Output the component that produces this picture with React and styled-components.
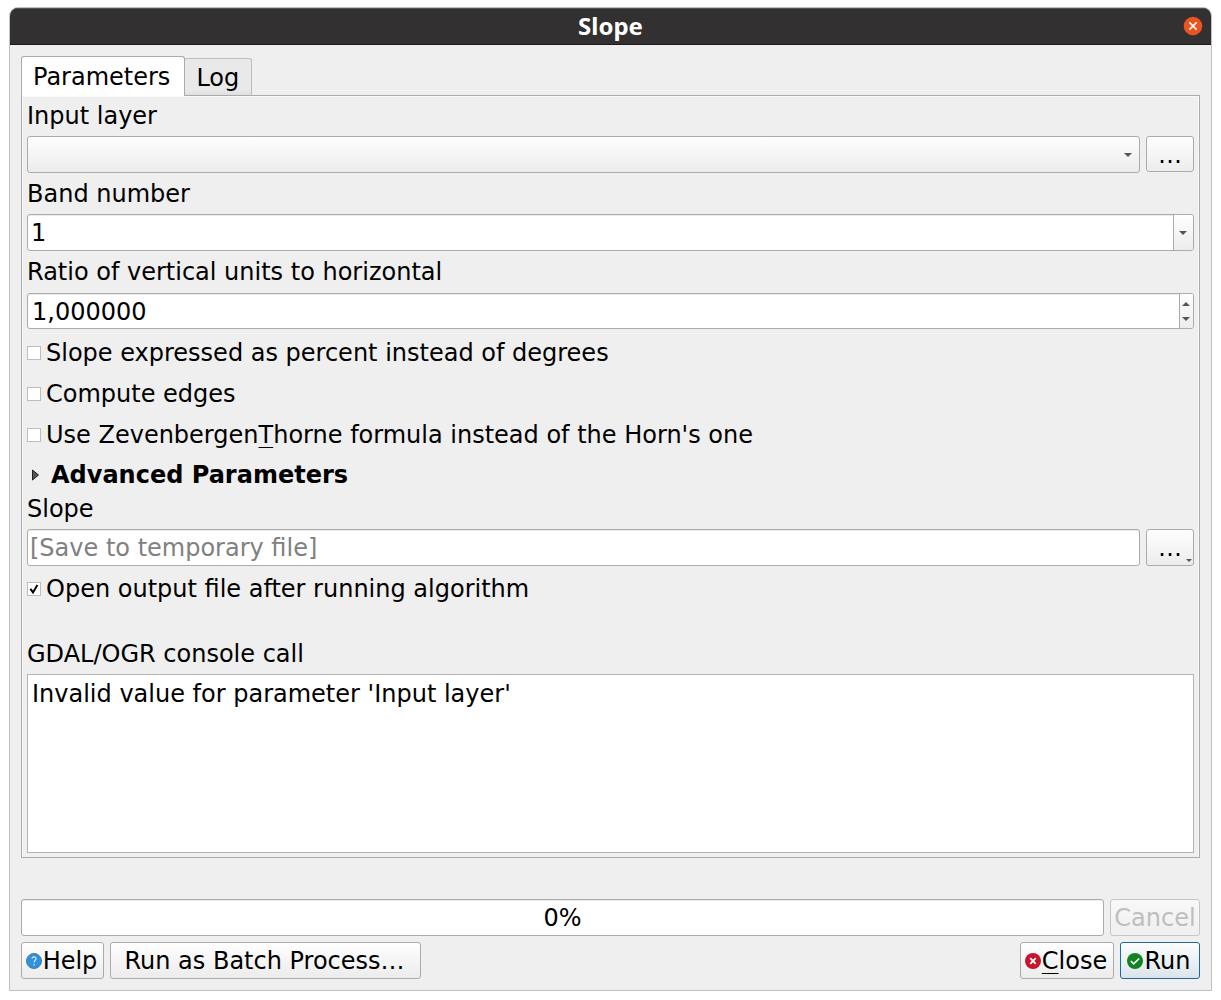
import React, { useState } from "react";
import styled, { createGlobalStyle, css } from "styled-components";

const GlobalStyle = createGlobalStyle`
  * { box-sizing: border-box; }
  body {
    margin: 0;
    background: #fff;
    color: #000;
    font: 24px/28px "DejaVu Sans", sans-serif;
  }
  button, input, select, textarea {
    margin: 0;
    font: inherit;
    color: inherit;
  }
`;

const raised = css`
  border: 1px solid #ababab;
  border-radius: 3px;
  background: linear-gradient(#fefefe, #ececec);
`;

const sunken = css`
  border: 1px solid #ababab;
  border-radius: 3px;
  background: #fff;
  box-shadow: inset 0 1px #ececec;
`;

const Window = styled.main`
  margin: 7px 9px 9px;
  border: 1px solid #c0c0c0;
  border-radius: 9px 9px 0 0;
  background: #efefef;
  overflow: hidden;
`;

const TitleBar = styled.header`
  display: grid;
  grid-template-columns: 1fr auto 1fr;
  align-items: center;
  height: 37px;
  padding: 0 8px 2px;
  background: #333031;
  border-top: 1px solid #555253;
  border-bottom: 1px solid #1d1c1c;
  color: #fff;
`;

const Title = styled.h1`
  grid-column: 2;
  margin: 0;
  font: bold 24px/33px "Noto Sans", sans-serif;
`;

const WindowClose = styled.button`
  justify-self: end;
  display: flex;
  padding: 0;
  border: 0;
  background: none;
`;

const Body = styled.form`
  display: flex;
  flex-direction: column;
  padding: 11px;
`;

const TabList = styled.div`
  display: flex;
  align-items: flex-end;
  height: 39px;
`;

const Tab = styled.button`
  height: ${(p) => (p.$active ? 40 : 38)}px;
  margin-bottom: -1px;
  margin-left: ${(p) => (p.$active ? 0 : -1)}px;
  padding: ${(p) => (p.$active ? "0 14px 0 11px" : "2px 12px 0 11px")};
  border: 1px solid ${(p) => (p.$active ? "#ababab" : "#bdbdbd")};
  border-bottom: ${(p) => (p.$active ? "0" : "1px solid #ababab")};
  border-radius: 3px 3px 0 0;
  background: ${(p) => (p.$active ? "#fff" : "linear-gradient(#e9e9e9 85%, #dfdfdf)")};
  z-index: ${(p) => (p.$active ? 1 : 0)};
`;

const Panel = styled.section`
  display: flex;
  flex-direction: column;
  gap: 6px;
  padding: 5px 5px 4px;
  border: 1px solid #ababab;
  box-shadow: inset 1px 1px #f9f9f9, inset -1px 0 #f9f9f9;
`;

const Label = styled.label`
  height: 29px;
  line-height: 30px;
`;

const Row = styled.div`
  display: flex;
  gap: 6px;
`;

const ComboFrame = styled.div`
  display: grid;
  grid-template-columns: 1fr 20px;
  flex: 1;
  min-height: 37px;
  ${(p) => (p.$editable ? sunken : raised)}
  overflow: hidden;
`;

const ComboSelect = styled.select`
  grid-area: 1 / 1 / 2 / 3;
  width: 100%;
  padding: 0 24px 0 3px;
  appearance: none;
  border: 0;
  background: none;
`;

const ComboArrow = styled.span`
  grid-area: 1 / 2;
  display: flex;
  align-items: center;
  justify-content: center;
  padding-right: 2px;
  pointer-events: none;
  ${(p) =>
    p.$boxed &&
    css`
      border-left: 1px solid #ababab;
      background: linear-gradient(#fefefe, #ececec);
    `}
`;

const SpinFrame = styled.div`
  display: flex;
  height: 36px;
  margin-top: 1px;
  ${sunken}
  overflow: hidden;
`;

const SpinInput = styled.input`
  flex: 1;
  min-width: 0;
  padding: 2px 4px 0;
  border: 0;
  background: none;
`;

const SpinButtons = styled.div`
  display: grid;
  grid-template-rows: 1fr 1fr;
  width: 14px;
  border-left: 1px solid #ababab;
  background: linear-gradient(#fefefe, #ececec);
`;

const SpinButton = styled.button`
  display: flex;
  align-items: center;
  justify-content: center;
  padding: ${(p) => (p.$lower ? "0 2px 2px 0" : "3px 2px 0 0")};
  border: 0;
  background: none;
`;

const CheckRow = styled.label`
  display: flex;
  align-items: center;
  gap: 5px;
  height: ${(p) => (p.$compact ? 33 : 35)}px;
  line-height: 30px;
`;

const CheckBox = styled.input`
  appearance: none;
  width: 14px;
  height: 14px;
  border: 1px solid #bdbdbd;
  background: #fff;
  grid-area: 1 / 1;
`;

const CheckFrame = styled.span`
  display: grid;
  place-items: center;
  svg {
    grid-area: 1 / 1;
    pointer-events: none;
  }
`;

const CheckText = styled.span`
  padding-top: 1px;
`;

const Mnemonic = styled.span`
  text-decoration: underline;
  text-decoration-thickness: 1px;
  text-underline-offset: 4px;
  text-decoration-skip-ink: none;
`;

const GroupToggle = styled.button`
  display: flex;
  align-items: center;
  gap: 12px;
  height: 30px;
  padding: 4px 5px 0;
  border: 0;
  background: none;
  line-height: 26px;
  font-weight: bold;
`;

const FileInput = styled.input`
  flex: 1;
  min-width: 0;
  height: 37px;
  padding: 0 2px;
  ${sunken}
  &::placeholder {
    color: #808080;
    opacity: 1;
  }
`;

const Button = styled.button`
  display: flex;
  align-items: center;
  justify-content: center;
  gap: 1px;
  height: 37px;
  min-width: ${(p) => p.$minWidth || 0}px;
  padding: 0 2px 0 0;
  white-space: nowrap;
  ${raised}
  &:disabled {
    padding: 0;
    color: #bebebe;
    border-color: #c6c6c6;
    background: linear-gradient(#f8f8f8, #efefef);
  }
  ${(p) =>
    p.$primary &&
    css`
      border-color: #20699c;
      background: linear-gradient(#fcfdfe, #dce4ea);
    `}
`;

const BrowseButton = styled(Button)`
  position: relative;
  width: 48px;
  height: ${(p) => (p.$menu ? 37 : 36)}px;
  padding: ${(p) => (p.$menu ? 0 : 2)}px 0 0;
`;

const MenuMark = styled.span`
  position: absolute;
  right: 1px;
  bottom: 3px;
  display: flex;
`;

const Console = styled.textarea`
  display: block;
  width: 100%;
  height: 179px;
  padding: 5px 4px;
  border: 1px solid #b4b4b4;
  background: #fff;
  resize: none;
`;

const ConsoleLabel = styled(Label)`
  margin-top: 28px;
`;

const ProgressRow = styled(Row)`
  margin: 41px 0 6px;
`;

const Progress = styled.div`
  flex: 1;
  height: 37px;
  text-align: center;
  line-height: 36px;
  ${sunken}
`;

const Spacer = styled.div`
  flex: 1;
`;

function Arrow({ up, small }) {
  return (
    <svg width={small ? 6 : 8} height={small ? 3 : 4} viewBox="0 0 8 4" aria-hidden="true">
      <path d={up ? "M0 4L4 0L8 4Z" : "M0 0H8L4 4Z"} fill="#555" />
    </svg>
  );
}

function RoundIcon({ kind }) {
  const fill = { help: "#2f93dc", close: "#c8142f", run: "#118322" }[kind];
  return (
    <svg width="16" height="16" viewBox="0 0 16 16" aria-hidden="true">
      <circle cx="8" cy="8" r={kind === "help" ? 7.5 : 8} fill={fill} stroke={kind === "help" ? "#47769a" : "none"} />
      {kind === "help" && (
        <>
          <path d="M5.9 5.4C6.2 3.4 10 3.4 10 5.7C10 7.4 8 7.5 8 9.6" fill="none" stroke="#d9eefc" strokeWidth="1.2" />
          <circle cx="8" cy="11.8" r=".8" fill="#d9eefc" />
        </>
      )}
      {kind === "close" && <path d="M5.2 5.2L10.8 10.8M10.8 5.2L5.2 10.8" stroke="#fff" strokeWidth="1.8" />}
      {kind === "run" && <path d="M3.8 8L6.7 10.9L12.2 5.5" fill="none" stroke="#fff" strokeWidth="1.6" />}
    </svg>
  );
}

function Check({ children, compact, initial = false }) {
  const [checked, setChecked] = useState(initial);
  return (
    <CheckRow $compact={compact}>
      <CheckFrame>
        <CheckBox type="checkbox" checked={checked} onChange={(e) => setChecked(e.target.checked)} />
        {checked && (
          <svg width="14" height="14" viewBox="0 0 14 14" aria-hidden="true">
            <path d="M3.4 6.8L6 10.4L10.4 3" fill="none" stroke="#000" strokeWidth="2" />
          </svg>
        )}
      </CheckFrame>
      <CheckText>{children}</CheckText>
    </CheckRow>
  );
}

export default function App() {
  return (
    <>
      <GlobalStyle />
      <Window>
        <TitleBar>
          <Title>Slope</Title>
          <WindowClose type="button" aria-label="Close window">
            <svg width="20" height="20" viewBox="0 0 20 20" aria-hidden="true">
              <circle cx="10" cy="10" r="9.3" fill="#e95420" />
              <path d="M6.4 6.4L13.6 13.6M13.6 6.4L6.4 13.6" stroke="#fff" strokeWidth="1.5" />
            </svg>
          </WindowClose>
        </TitleBar>
        <Body onSubmit={(e) => e.preventDefault()}>
          <TabList role="tablist">
            <Tab type="button" role="tab" aria-selected="true" $active>Parameters</Tab>
            <Tab type="button" role="tab" aria-selected="false">Log</Tab>
          </TabList>
          <Panel role="tabpanel">
            <Label htmlFor="layer">Input layer</Label>
            <Row>
              <ComboFrame>
                <ComboSelect id="layer"><option value="" /></ComboSelect>
                <ComboArrow><Arrow /></ComboArrow>
              </ComboFrame>
              <BrowseButton type="button">…</BrowseButton>
            </Row>
            <Label htmlFor="band">Band number</Label>
            <ComboFrame $editable>
              <ComboSelect id="band"><option>1</option></ComboSelect>
              <ComboArrow $boxed><Arrow /></ComboArrow>
            </ComboFrame>
            <Label htmlFor="ratio">Ratio of vertical units to horizontal</Label>
            <SpinFrame>
              <SpinInput id="ratio" type="text" inputMode="decimal" defaultValue="1,000000" />
              <SpinButtons>
                <SpinButton type="button" aria-label="Increase"><Arrow up /></SpinButton>
                <SpinButton type="button" aria-label="Decrease" $lower><Arrow /></SpinButton>
              </SpinButtons>
            </SpinFrame>
            <Check>Slope expressed as percent instead of degrees</Check>
            <Check>Compute edges</Check>
            <Check>Use Zevenbergen<Mnemonic>T</Mnemonic>horne formula instead of the Horn's one</Check>
            <GroupToggle type="button" aria-expanded="false">
              <svg width="7" height="12" viewBox="0 0 7 12" aria-hidden="true">
                <path d="M.5 1V11L6.5 6Z" fill="#555" stroke="#222" />
              </svg>
              Advanced Parameters
            </GroupToggle>
            <Label htmlFor="output">Slope</Label>
            <Row>
              <FileInput id="output" type="text" placeholder="[Save to temporary file]" />
              <BrowseButton type="button" $menu>
                …
                <MenuMark><Arrow small /></MenuMark>
              </BrowseButton>
            </Row>
            <Check initial compact>Open output file after running algorithm</Check>
            <ConsoleLabel htmlFor="console">GDAL/OGR console call</ConsoleLabel>
            <Console id="console" readOnly value="Invalid value for parameter 'Input layer'" />
          </Panel>
          <ProgressRow>
            <Progress role="progressbar" aria-valuenow={0} aria-valuemin={0} aria-valuemax={100}>0%</Progress>
            <Button type="button" disabled $minWidth={90}>Cancel</Button>
          </ProgressRow>
          <Row>
            <Button type="button" $minWidth={83}><RoundIcon kind="help" />Help</Button>
            <Button type="button" $minWidth={311}>Run as Batch Process…</Button>
            <Spacer />
            <Button type="button" $minWidth={94}>
              <RoundIcon kind="close" />
              <span><Mnemonic>C</Mnemonic>lose</span>
            </Button>
            <Button type="submit" $minWidth={80} $primary><RoundIcon kind="run" />Run</Button>
          </Row>
        </Body>
      </Window>
    </>
  );
}
